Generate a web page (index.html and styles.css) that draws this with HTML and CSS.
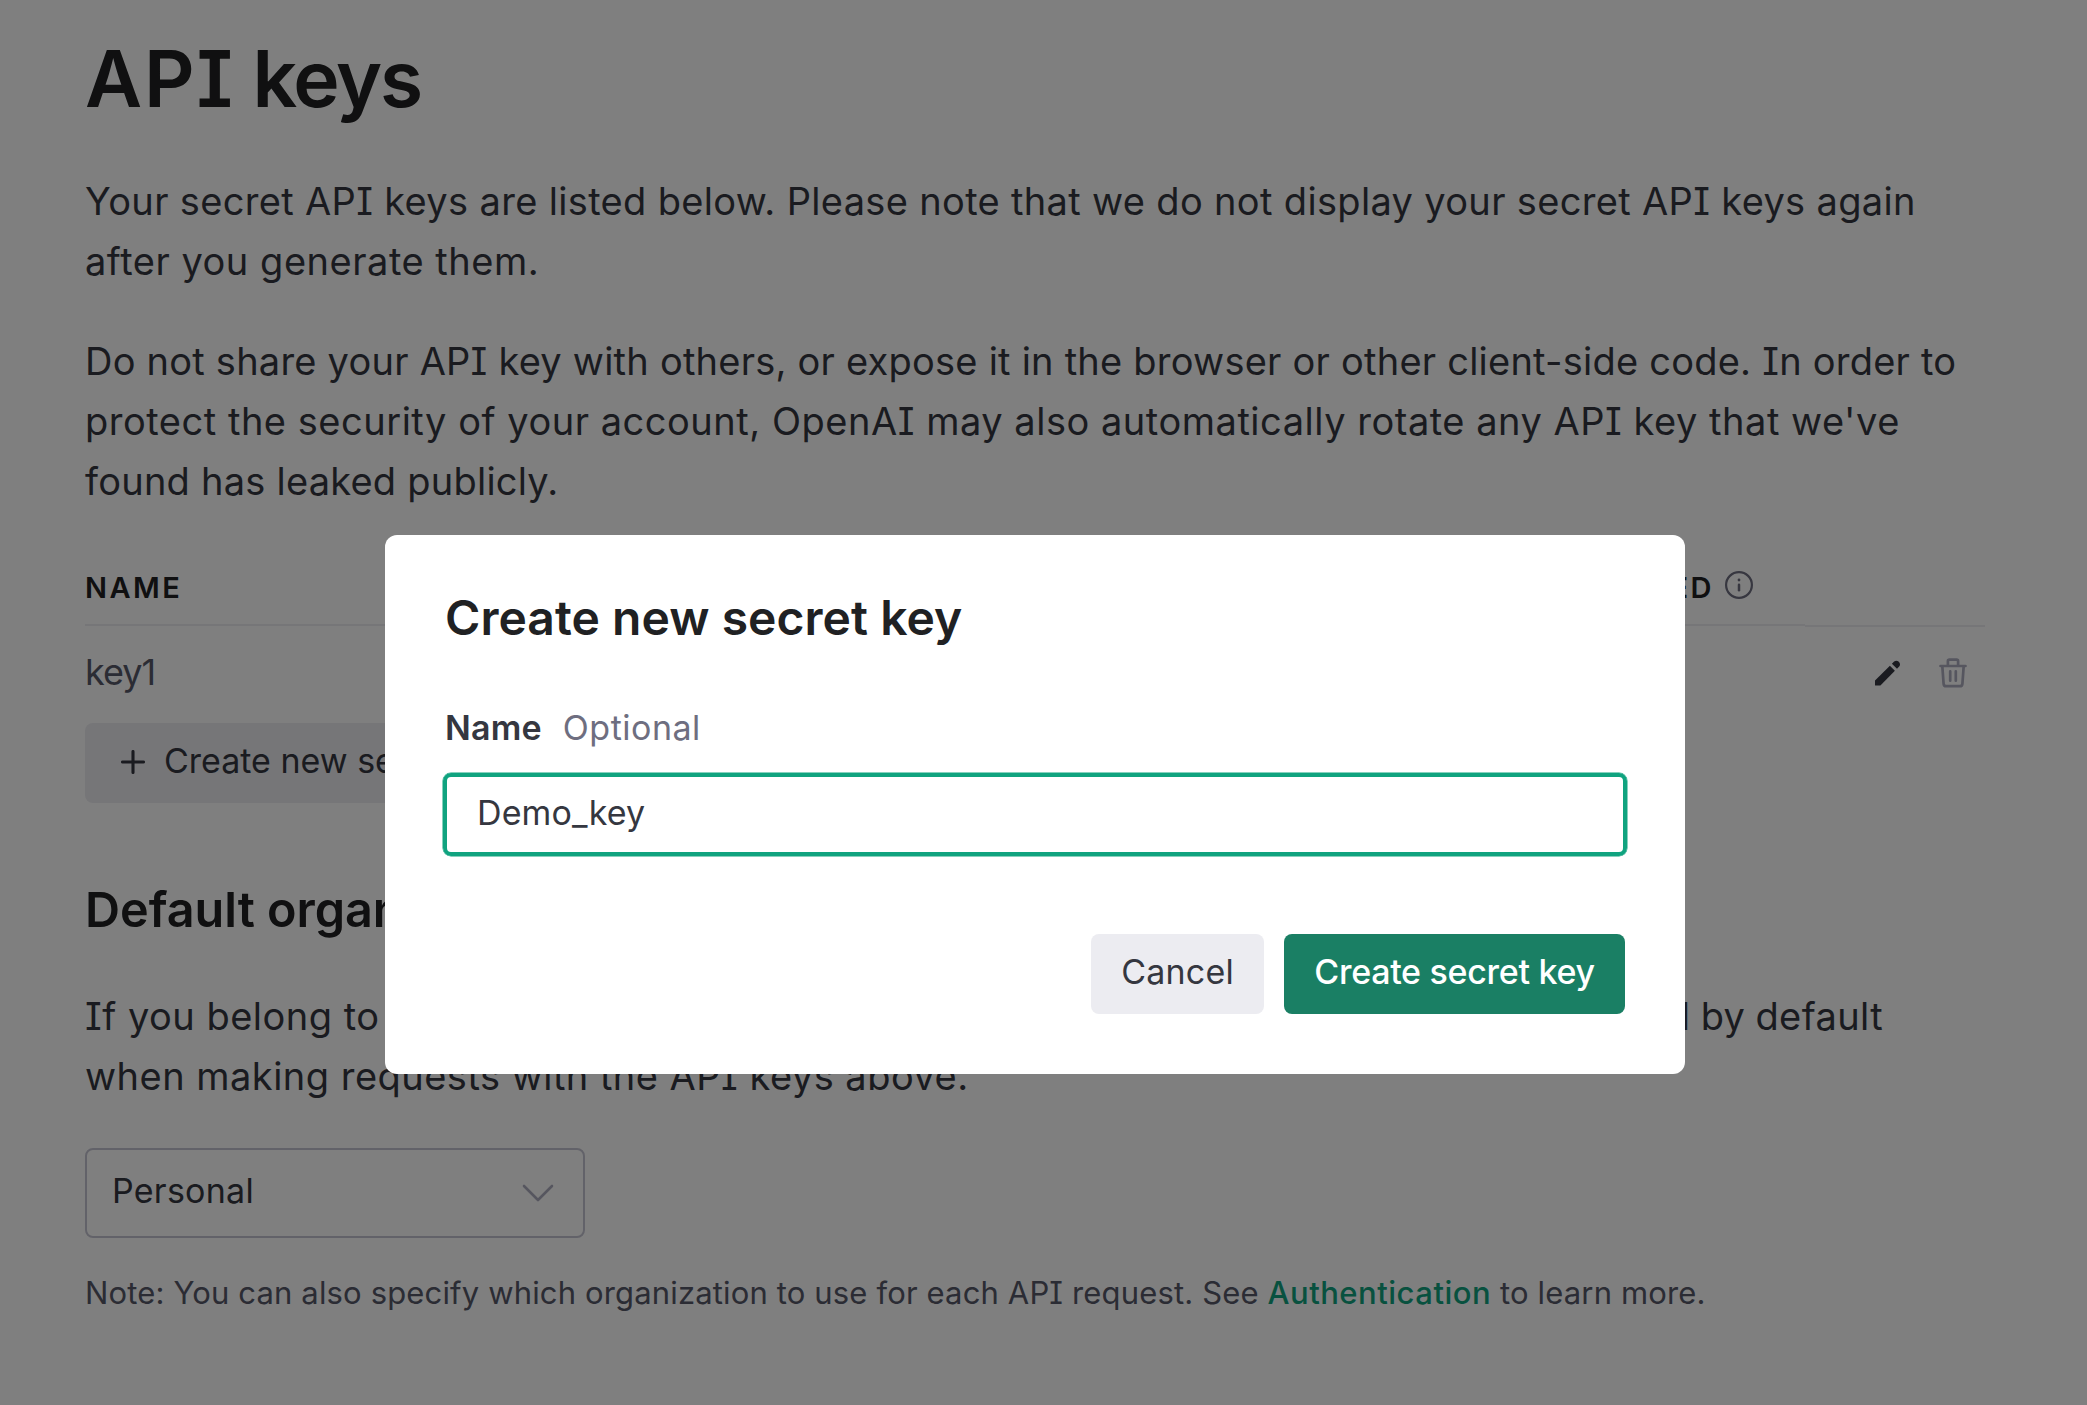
FILE: index.html
```
<!DOCTYPE html>
<html lang="en">
<head>
<meta charset="utf-8">
<title>API keys</title>
<link rel="stylesheet" href="styles.css">
</head>
<body>
<main class="page">
  <h1 class="page-title"><span class="title-api">API</span> keys</h1>
  <p class="body-text intro">Your secret API keys are listed below. Please note that we do not display your secret API keys again<br><span class="wide">after you generate them.</span></p>
  <p class="body-text rotate">Do not share your API key with others, or expose it in the browser or other client-side code. In order to<br><span class="wide">protect the security of your account, OpenAI may also automatically rotate any API key that we've</span><br>found has leaked publicly.</p>

  <section class="keys">
    <div class="cell head">NAME</div>
    <div class="cell head head-used">LAST USED
      <svg class="info" viewBox="0 0 28 28" fill="none"><circle cx="14" cy="14" r="12.9" stroke="#6e6e80" stroke-width="2.2"/><path d="M14 13.8v5.4" stroke="#6e6e80" stroke-width="2.5" stroke-linecap="round"/><circle cx="14" cy="9" r="1.4" fill="#6e6e80"/></svg>
    </div>
    <div class="cell head head-actions"></div>
    <div class="cell name">key1</div>
    <div class="cell"></div>
    <div class="cell actions">
      <svg class="pencil" viewBox="0 0 26 26" fill="#353740"><path d="M0 20.6 14.9 5.7l5 5L5.4 25.6H.6a.6.6 0 0 1-.6-.6z"/><path d="m16.9 3.7 2.2-2.3a3.7 3.7 0 0 1 5.1 5.2l-2.2 2.2z"/></svg>
      <svg class="trash" viewBox="0 0 28 30" fill="none" stroke="#acacbe" stroke-width="2.7" stroke-linecap="round" stroke-linejoin="round"><path d="M1.500 8h25M8.900 8V3.200c0-.9.6-1.500 1.500-1.500h7.200c.9 0 1.500.6 1.500 1.500V8M3.300 8l1.300 17.800c.1 1.500 1 2.400 2.500 2.400h13.800c1.500 0 2.400-.9 2.500-2.400L24.700 8M11.200 13.300v9.400M16.800 13.300v9.400"/></svg>
    </div>
  </section>

  <button class="btn create">
    <svg class="plus" viewBox="0 0 24 24" fill="none" stroke="#353740" stroke-width="3.1" stroke-linecap="round"><path d="M12 1.500v21M1.500 12h21"/></svg>
    Create new secret key
  </button>

  <h2 class="section-title">Default organization</h2>
  <p class="body-text org-text">If you belong to <span class="org-rest">multiple organizations, this setting controls which organization is used</span><span class="org-end"> by default</span><br>when making requests with the API keys above.</p>
  <div class="select">Personal
    <svg class="chevron" viewBox="0 0 32 18" fill="none" stroke="#acacbe" stroke-width="2.600" stroke-linecap="round" stroke-linejoin="round"><path d="M2 2l14 14L30 2"/></svg>
  </div>
  <p class="note">Note: You can also specify which organization to use for each API request. See <a class="link">Authentication</a> to learn more.</p>
</main>

<div class="scrim">
  <div class="modal" role="dialog">
    <h3 class="modal-title">Create new secret key</h3>
    <div class="label-row"><span class="label">Name</span><span class="optional">Optional</span></div>
    <div class="input">Demo_key</div>
    <div class="modal-actions">
      <button class="btn cancel">Cancel</button>
      <button class="btn primary">Create secret key</button>
    </div>
  </div>
</div>
</body>
</html>
```
FILE: styles.css
```
* { box-sizing: border-box; }
body {
  margin: 0;
  height: 1405px;
  overflow: hidden;
  background: #fff;
  color: #353740;
  font-family: Inter, "Liberation Sans", sans-serif;
  font-feature-settings: "cv08" 1;
}
h1, h2, h3, p { margin: 0; }
svg { display: block; flex: none; }

.page { padding: 30px 102px 0 85px; white-space: nowrap; }
.page-title {
  font-size: 78.5px;
  line-height: 97px;
  margin-bottom: -1px;
  font-weight: 600;
  letter-spacing: -2.2px;
  color: #202123;
}
.title-api { letter-spacing: 1.9px; }
.body-text { font-size: 38px; line-height: 60px; letter-spacing: 0.335px; }
.intro { margin-top: 45px; }
.rotate { margin-top: 40px; letter-spacing: 0.23px; }
.wide { letter-spacing: 0.52px; }
.org-text { margin-top: 46px; letter-spacing: 0.48px; }
.org-rest { letter-spacing: 0.6px; }
.org-end { letter-spacing: 0.4px; word-spacing: -1px; }

.keys {
  display: grid;
  grid-template-columns: 1fr 340px 180px;
  margin-top: 54px;
}
.head {
  height: 61px;
  border-bottom: 2px solid #ececf1;
  font-size: 29px;
  line-height: 45px;
  font-weight: 600;
  letter-spacing: 2.5px;
  color: #202123;
}
.head-used { display: flex; justify-content: flex-end; gap: 11px; padding-right: 52px; }
.head-actions { height: 62px; }
.info { width: 28px; height: 28px; margin-top: 6px; }
.name {
  height: 96px;
  padding-top: 19px;
  font-size: 36px;
  line-height: 52px;
  letter-spacing: -1px;
  color: #565869;
}
.actions { display: flex; justify-content: flex-end; gap: 38px; padding: 31px 18px 0 0; }
.pencil { width: 26px; height: 26px; margin-top: 2px; }
.trash { width: 28px; height: 30px; }

.btn {
  display: flex;
  align-items: center;
  height: 80px;
  border: 0;
  border-radius: 8px;
  padding: 0 31px 5px;
  background: #ececf1;
  color: #353740;
  font: inherit;
  font-size: 34px;
  font-feature-settings: inherit;
  white-space: nowrap;
}
.create { gap: 19px; padding: 0 35px 6px 36px; }
.plus { width: 24px; height: 24px; margin-top: 4px; }

.section-title {
  margin-top: 77px;
  font-size: 48.5px;
  line-height: 60px;
  font-weight: 600;
  color: #202123;
}
.select {
  display: flex;
  align-items: center;
  justify-content: space-between;
  width: 500px;
  height: 90px;
  margin-top: 42px;
  padding: 0 29px 5px 25px;
  border: 2px solid #c5c5d2;
  border-radius: 8px;
  font-size: 34px;
  letter-spacing: 0.25px;
}
.chevron { width: 32px; height: 18px; margin-top: 4px; }
.note {
  margin-top: 29px;
  font-size: 31px;
  line-height: 51px;
  letter-spacing: 0.15px;
  color: #565869;
}
.link { color: #10a37f; font-weight: 500; letter-spacing: 0.5px; }

.scrim {
  position: absolute;
  inset: 0;
  display: flex;
  align-items: flex-start;
  padding: 535px 0 0 385px;
  background: rgba(0, 0, 0, 0.5);
}
.modal {
  width: 1300px;
  height: 539px;
  padding: 52px 60px 0;
  border-radius: 12px;
  background: #fff;
}
.modal-title {
  font-size: 48px;
  line-height: 61px;
  font-weight: 600;
  letter-spacing: 0.05px;
  color: #202123;
}
.label-row {
  display: flex;
  gap: 21px;
  margin-top: 54px;
  font-size: 34px;
  line-height: 51px;
}
.label { font-weight: 600; letter-spacing: 0.2px; }
.optional { color: #6e6e80; letter-spacing: 0.5px; }
.input {
  display: flex;
  align-items: center;
  height: 83px;
  margin: 20px -2px 0;
  padding: 0 30px 4px;
  border: 4px solid #10a37f;
  border-radius: 8px;
  box-shadow: 0 0 0 0.5px #10a37f;
  font-size: 34px;
  letter-spacing: 0.1px;
}
.modal-actions { display: flex; justify-content: flex-end; gap: 20px; margin-top: 78px; }
.cancel { width: 173px; justify-content: center; letter-spacing: 0.2px; }
.primary {
  width: 341px;
  justify-content: center;
  background: #1a7f64;
  color: #fff;
  font-weight: 500;
  letter-spacing: -0.3px;
}
```
